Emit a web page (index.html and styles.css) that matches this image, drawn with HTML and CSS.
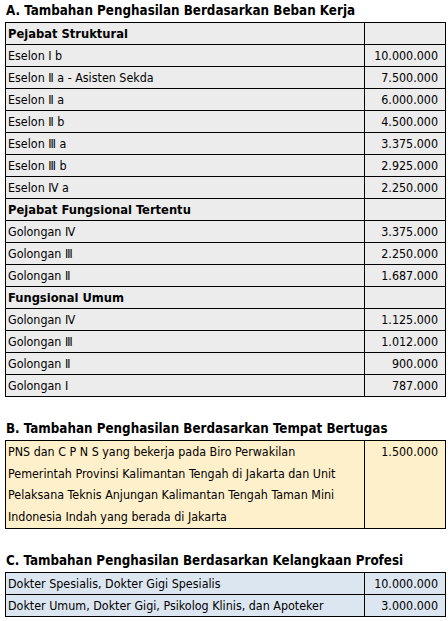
FILE: index.html
```html
<!DOCTYPE html>
<html>
<head>
<meta charset="utf-8">
<link rel="stylesheet" href="styles.css">
</head>
<body>
<div class="page">
  <h2 class="title">A. Tambahan Penghasilan Berdasarkan Beban Kerja</h2>
  <table class="tbl gray">
    <colgroup><col class="c1"><col class="c2"></colgroup>
    <tr class="head"><td>Pejabat Struktural</td><td></td></tr>
    <tr><td>Eselon Ⅰ b</td><td class="num">10.000.000</td></tr>
    <tr><td>Eselon Ⅱ a - Asisten Sekda</td><td class="num">7.500.000</td></tr>
    <tr><td>Eselon Ⅱ a</td><td class="num">6.000.000</td></tr>
    <tr><td>Eselon Ⅱ b</td><td class="num">4.500.000</td></tr>
    <tr><td>Eselon Ⅲ a</td><td class="num">3.375.000</td></tr>
    <tr><td>Eselon Ⅲ b</td><td class="num">2.925.000</td></tr>
    <tr><td>Eselon Ⅳ a</td><td class="num">2.250.000</td></tr>
    <tr class="head"><td>Pejabat Fungsional Tertentu</td><td></td></tr>
    <tr><td>Golongan Ⅳ</td><td class="num">3.375.000</td></tr>
    <tr><td>Golongan Ⅲ</td><td class="num">2.250.000</td></tr>
    <tr><td>Golongan Ⅱ</td><td class="num">1.687.000</td></tr>
    <tr class="head"><td>Fungsional Umum</td><td></td></tr>
    <tr><td>Golongan Ⅳ</td><td class="num">1.125.000</td></tr>
    <tr><td>Golongan Ⅲ</td><td class="num">1.012.000</td></tr>
    <tr><td>Golongan Ⅱ</td><td class="num">900.000</td></tr>
    <tr><td>Golongan Ⅰ</td><td class="num">787.000</td></tr>
  </table>

  <h2 class="title gap">B. Tambahan Penghasilan Berdasarkan Tempat Bertugas</h2>
  <table class="tbl cream">
    <colgroup><col class="c1"><col class="c2"></colgroup>
    <tr><td class="multi">PNS dan C P N S yang bekerja pada Biro Perwakilan<br>Pemerintah Provinsi Kalimantan Tengah di Jakarta dan Unit<br>Pelaksana Teknis Anjungan Kalimantan Tengah Taman Mini<br>Indonesia Indah yang berada di Jakarta</td><td class="num top">1.500.000</td></tr>
  </table>

  <h2 class="title gap">C. Tambahan Penghasilan Berdasarkan Kelangkaan Profesi</h2>
  <table class="tbl blue">
    <colgroup><col class="c1"><col class="c2"></colgroup>
    <tr><td>Dokter Spesialis, Dokter Gigi Spesialis</td><td class="num">10.000.000</td></tr>
    <tr><td>Dokter Umum, Dokter Gigi, Psikolog Klinis, dan Apoteker</td><td class="num">3.000.000</td></tr>
  </table>
</div>
</body>
</html>
```

FILE: styles.css
```css
html, body {
  margin: 0;
  padding: 0;
  background: #ffffff;
}

.page {
  padding: 0 0 0 5px;
  width: 440px;
  font-family: "DejaVu Sans Condensed", "DejaVu Sans", sans-serif;
  font-size: 12.4px;
  color: #000;
}

.title {
  margin: 0;
  padding-left: 1px;
  font-size: 13.3px;
  font-weight: bold;
  line-height: 22px;
}

.title.gap {
  margin-top: 21px;
}

.tbl {
  width: 440px;
  border-collapse: collapse;
  table-layout: fixed;
}

.tbl col.c1 { width: 359px; }
.tbl col.c2 { width: 81px; }

.tbl td {
  border: 1px solid #000;
  padding: 0 2px;
  height: 21px;
  line-height: 21px;
  white-space: nowrap;
  overflow: hidden;
}

.tbl td.num {
  text-align: right;
  padding-right: 7px;
}

.tbl .head td {
  font-weight: bold;
  font-size: 12.8px;
}

.tbl td.multi {
  line-height: 21.7px;
}

.tbl td.top {
  vertical-align: top;
}

.gray td { background: #ececec; }
.cream td { background: #fff0cc; }
.blue td { background: #dce6f1; }
```
